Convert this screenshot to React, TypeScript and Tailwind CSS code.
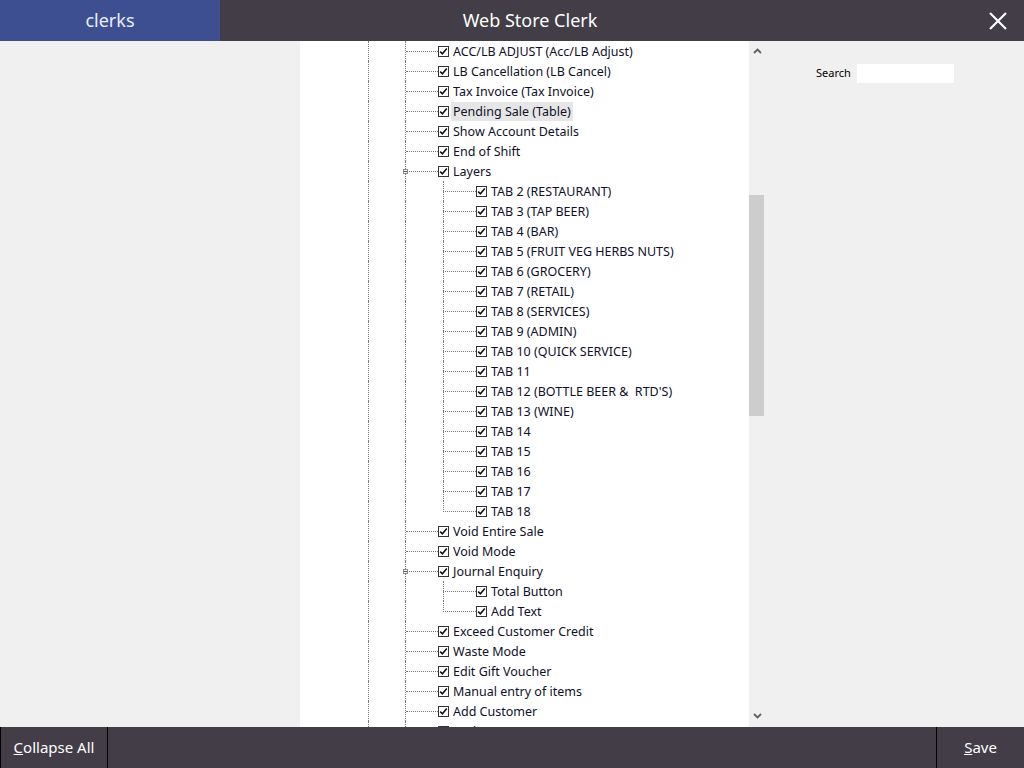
import React from "react";

type Node = { label: string; children?: string[]; hl?: boolean };

const tree: Node[] = [
  { label: "ACC/LB ADJUST (Acc/LB Adjust)" },
  { label: "LB Cancellation (LB Cancel)" },
  { label: "Tax Invoice (Tax Invoice)" },
  { label: "Pending Sale (Table)", hl: true },
  { label: "Show Account Details" },
  { label: "End of Shift" },
  {
    label: "Layers",
    children: [
      "TAB 2 (RESTAURANT)",
      "TAB 3 (TAP BEER)",
      "TAB 4 (BAR)",
      "TAB 5 (FRUIT VEG HERBS NUTS)",
      "TAB 6 (GROCERY)",
      "TAB 7 (RETAIL)",
      "TAB 8 (SERVICES)",
      "TAB 9 (ADMIN)",
      "TAB 10 (QUICK SERVICE)",
      "TAB 11",
      "TAB 12 (BOTTLE BEER &  RTD'S)",
      "TAB 13 (WINE)",
      "TAB 14",
      "TAB 15",
      "TAB 16",
      "TAB 17",
      "TAB 18",
    ],
  },
  { label: "Void Entire Sale" },
  { label: "Void Mode" },
  { label: "Journal Enquiry", children: ["Total Button", "Add Text"] },
  { label: "Exceed Customer Credit" },
  { label: "Waste Mode" },
  { label: "Edit Gift Voucher" },
  { label: "Manual entry of items" },
  { label: "Add Customer" },
  { label: "Lock Item" },
];

const Check = () => (
  <svg width="11" height="11" viewBox="0 0 11 11" className="shrink-0">
    <rect x="0.5" y="0.5" width="10" height="10" fill="#fff" stroke="#333" strokeWidth="1" />
    <polyline points="2.2,5.6 4.4,7.8 8.8,2.6" fill="none" stroke="#111" strokeWidth="1.6" />
  </svg>
);

const Label = ({ text, hl }: { text: string; hl?: boolean }) => (
  <span
    className={
      "ml-[2px] px-[2px] h-[19px] pt-[2px] flex items-center whitespace-pre text-[12.5px] text-[#10102a] " +
      (hl ? "bg-[#e6e6e6]" : "")
    }
  >
    {text}
  </span>
);

const Level1 = ({ node }: { node: Node }) => (
  <div className="flex h-[20px] items-center">
    <div className="w-[68px] h-full shrink-0" />
    <div className="w-[37px] h-full shrink-0 border-l border-dotted border-[#7a7a7a]" />
    <div className="relative w-[33px] h-full shrink-0 border-l border-dotted border-[#7a7a7a]">
      <div className="absolute left-0 right-0 top-[10px] border-t border-dotted border-[#7a7a7a]" />
      {node.children && (
        <div className="absolute left-[-3px] top-[8px] w-[5px] h-[5px] bg-white border border-[#8a8a8a] flex items-center justify-center">
          <div className="w-[3px] h-px bg-[#555]" />
        </div>
      )}
    </div>
    <Check />
    <Label text={node.label} hl={node.hl} />
  </div>
);

const Level2 = ({ text, last }: { text: string; last: boolean }) => (
  <div className="flex h-[20px] items-center">
    <div className="w-[68px] h-full shrink-0" />
    <div className="w-[37px] h-full shrink-0 border-l border-dotted border-[#7a7a7a]" />
    <div className="w-[38px] h-full shrink-0 border-l border-dotted border-[#7a7a7a]" />
    <div className="relative w-[33px] h-full shrink-0">
      <div
        className={
          "absolute left-0 top-0 border-l border-dotted border-[#7a7a7a] " +
          (last ? "h-[11px]" : "h-full")
        }
      />
      <div className="absolute left-0 right-0 top-[10px] border-t border-dotted border-[#7a7a7a]" />
    </div>
    <Check />
    <Label text={text} />
  </div>
);

const Chevron = ({ up }: { up?: boolean }) => (
  <svg width="9" height="6" viewBox="0 0 9 6">
    <polyline
      points={up ? "1,5 4.5,1.5 8,5" : "1,1 4.5,4.5 8,1"}
      fill="none"
      stroke="#606060"
      strokeWidth="1.8"
    />
  </svg>
);

export default function App() {
  return (
    <div
      className="w-[1024px] h-[768px] flex flex-col bg-[#f0f0f0] overflow-hidden"
      style={{ fontFamily: '"Noto Sans", "Open Sans", sans-serif' }}
    >
      {/* header */}
      <div className="h-[41px] shrink-0 flex bg-[#423d47]">
        <div className="w-[220px] h-full bg-[#3e4f91] flex items-center justify-center text-[18px] text-[#e8eeff]">
          clerks
        </div>
        <div className="flex-1 flex items-center justify-center text-[18px] text-white pr-[134px]">
          Web Store Clerk
        </div>
        <div className="w-[50px] h-full flex items-center justify-center pr-[2px]">
          <svg width="20" height="20" viewBox="0 0 20 20">
            <line x1="2" y1="2" x2="18" y2="18" stroke="#fff" strokeWidth="2.2" />
            <line x1="18" y1="2" x2="2" y2="18" stroke="#fff" strokeWidth="2.2" />
          </svg>
        </div>
      </div>

      {/* middle */}
      <div className="flex-1 flex min-h-0">
        <div className="w-[300px] shrink-0 bg-[#f0f0f0]" />
        <div className="w-[449px] shrink-0 bg-white overflow-hidden">
          {tree.map((n, i) => (
            <React.Fragment key={i}>
              <Level1 node={n} />
              {n.children &&
                n.children.map((c, j) => (
                  <Level2 key={j} text={c} last={j === n.children!.length - 1} />
                ))}
            </React.Fragment>
          ))}
        </div>
        <div className="w-[16px] shrink-0 bg-[#f0f0f0] flex flex-col">
          <div className="h-[17px] flex items-center justify-center pt-[3px]">
            <Chevron up />
          </div>
          <div className="h-[137px]" />
          <div className="h-[221px] w-[15px] bg-[#cdcdcd]" />
          <div className="flex-1" />
          <div className="h-[17px] flex items-center justify-center pb-[6px]">
            <Chevron />
          </div>
        </div>
        <div className="flex-1 bg-[#f0f0f0]">
          <div className="flex items-center pt-[23px] pl-[51px]">
            <span className="text-[11px] text-black">Search</span>
            <div className="ml-[6px] w-[97px] h-[19px] bg-white" />
          </div>
        </div>
      </div>

      {/* footer */}
      <div className="h-[41px] shrink-0 flex bg-[#423d47] text-white text-[15px]">
        <div className="w-[108px] h-full border-l border-r border-black flex items-center justify-center">
          <span>
            <span className="underline">C</span>ollapse All
          </span>
        </div>
        <div className="flex-1" />
        <div className="w-[88px] h-full border-l border-black flex items-center justify-center">
          <span>
            <span className="underline">S</span>ave
          </span>
        </div>
      </div>
    </div>
  );
}
